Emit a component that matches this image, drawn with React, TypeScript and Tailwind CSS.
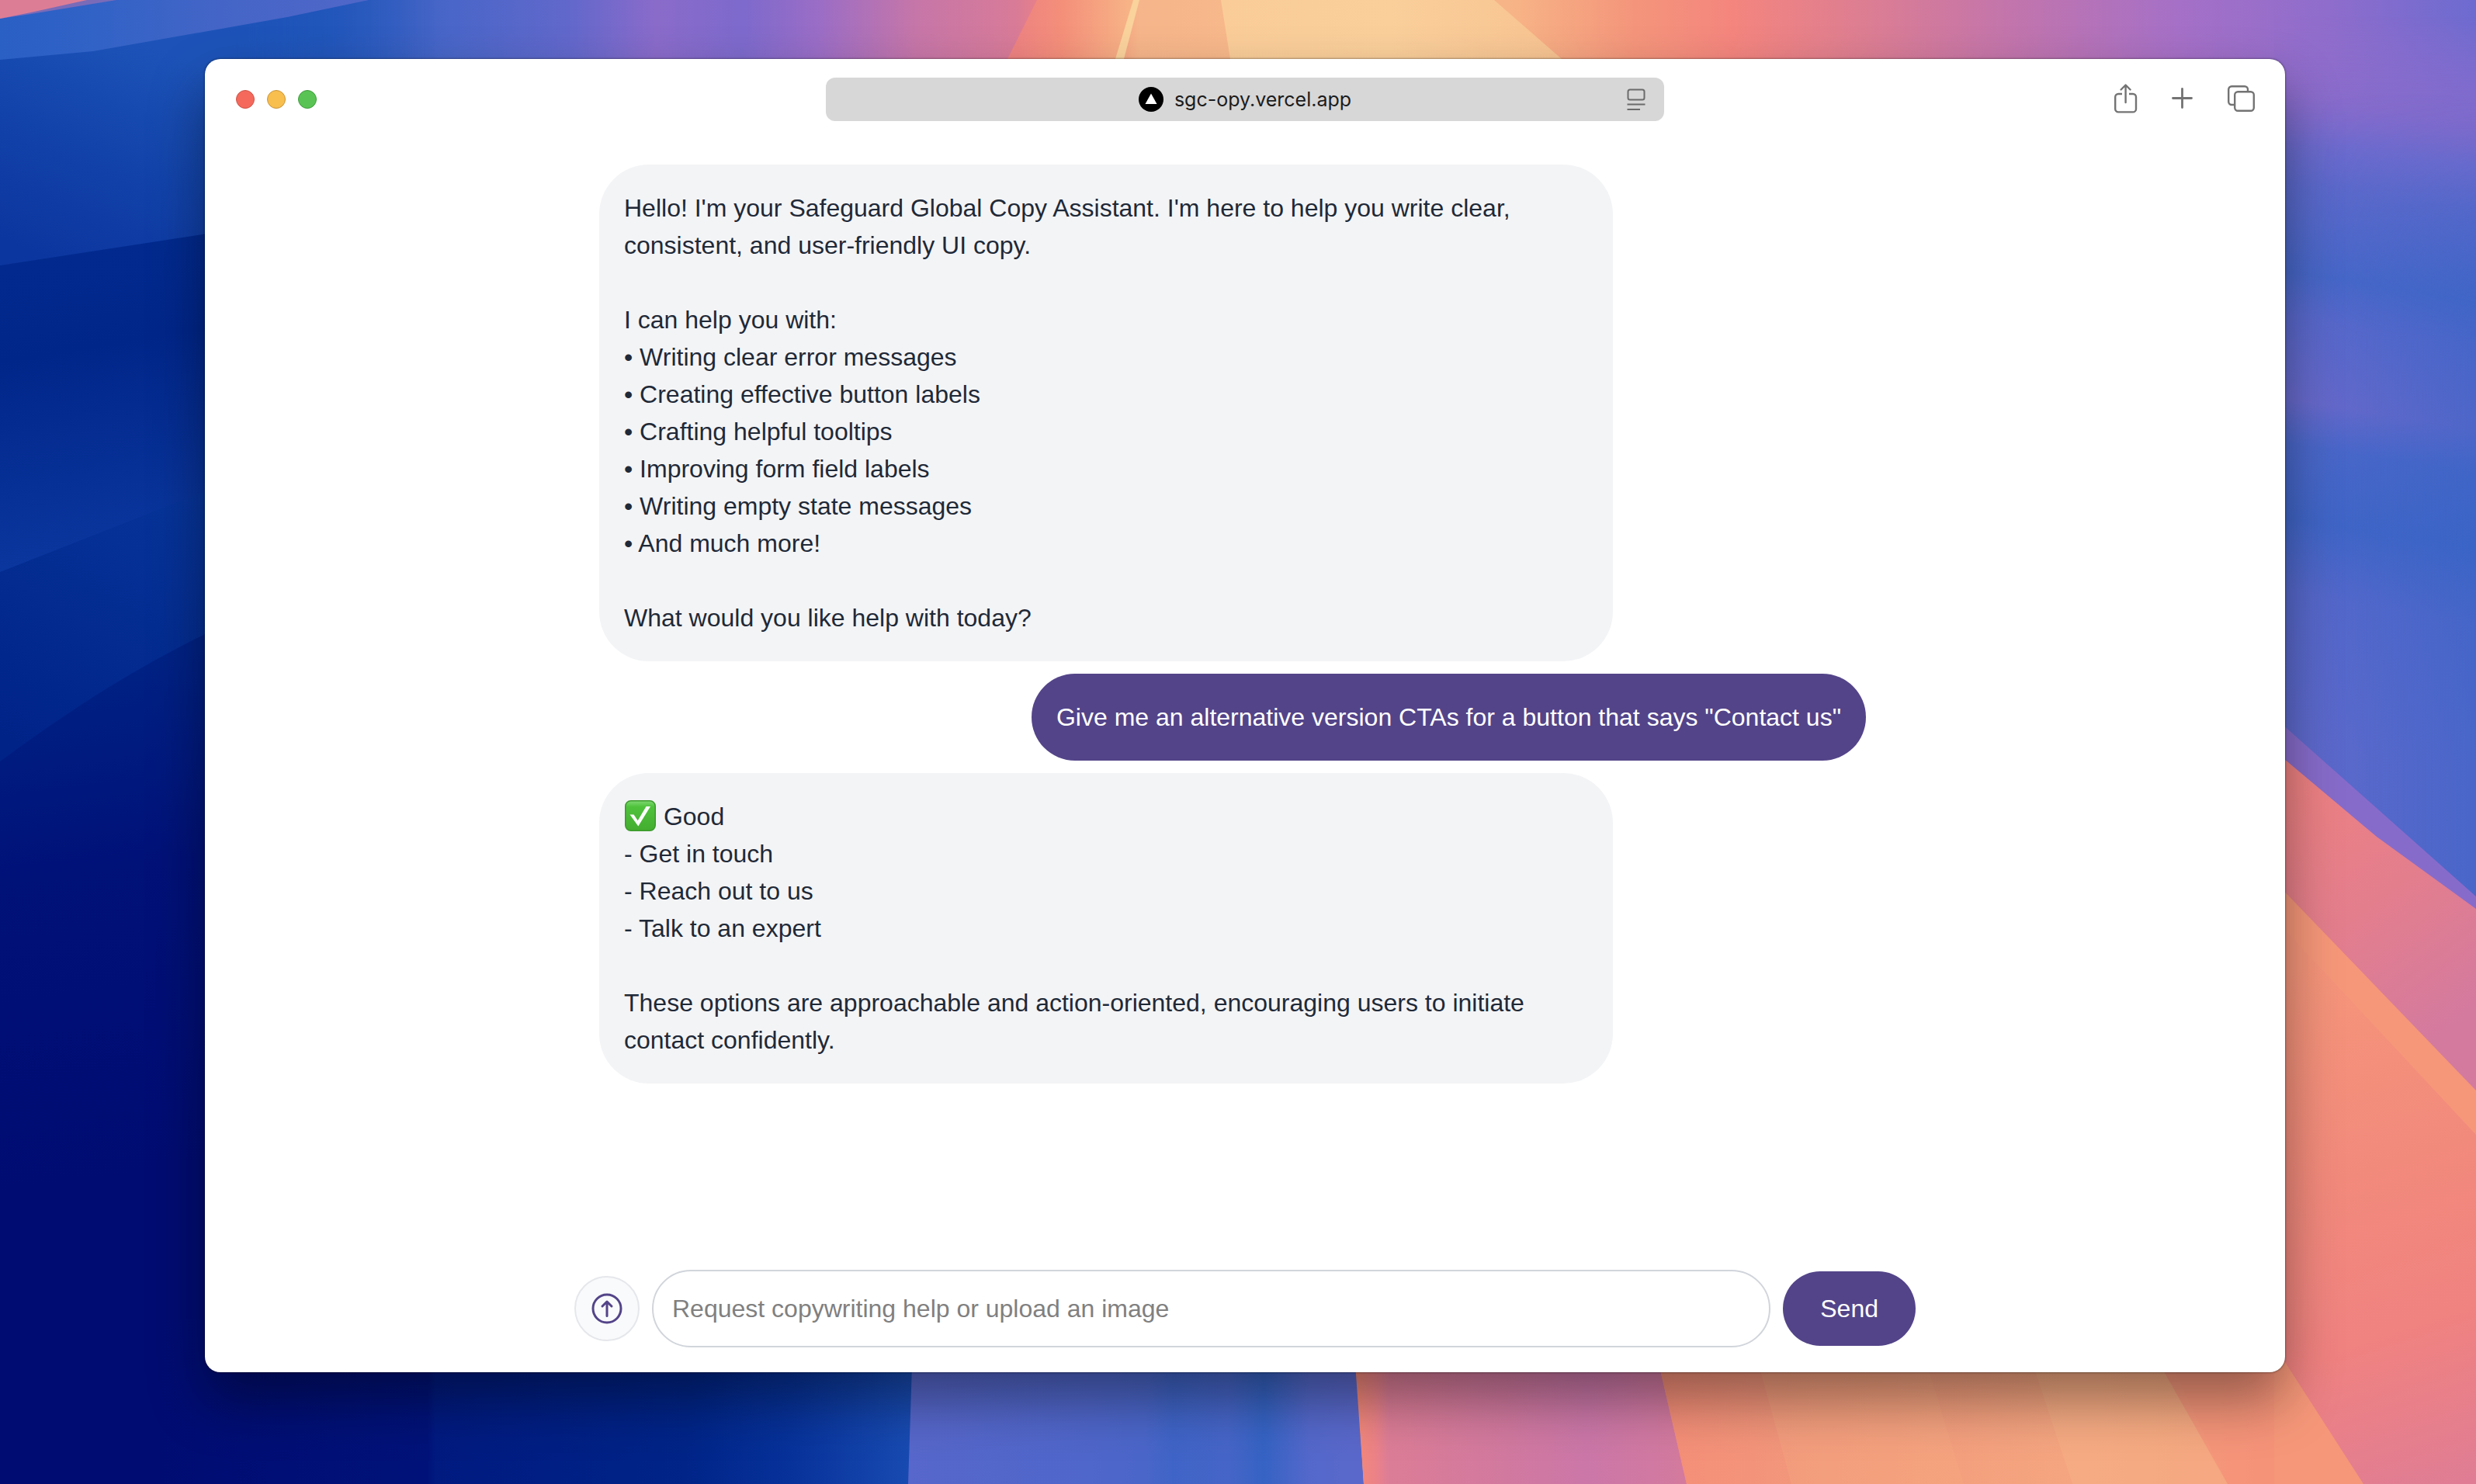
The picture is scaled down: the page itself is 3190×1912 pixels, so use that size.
import React from "react";

const helpTopics = [
  "Writing clear error messages",
  "Creating effective button labels",
  "Crafting helpful tooltips",
  "Improving form field labels",
  "Writing empty state messages",
  "And much more!",
];

const goodOptions = ["Get in touch", "Reach out to us", "Talk to an expert"];

function Wallpaper() {
  return (
    <svg
      className="absolute inset-0 h-full w-full"
      viewBox="0 0 3190 1912"
      preserveAspectRatio="none"
      aria-hidden="true"
    >
      <defs>
        <linearGradient id="sky" gradientUnits="userSpaceOnUse" x1="0" y1="0" x2="3190" y2="0">
          <stop offset="0" stopColor="#1d52b8" />
          <stop offset="0.13" stopColor="#2559bc" />
          <stop offset="0.18" stopColor="#4866c8" />
          <stop offset="0.23" stopColor="#6268cb" />
          <stop offset="0.265" stopColor="#8a6bca" />
          <stop offset="0.3" stopColor="#7d6acc" />
          <stop offset="0.33" stopColor="#9a6dc6" />
          <stop offset="0.37" stopColor="#c676a8" />
          <stop offset="0.41" stopColor="#d87b98" />
          <stop offset="0.425" stopColor="#f08380" />
          <stop offset="0.45" stopColor="#f59f7d" />
          <stop offset="0.46" stopColor="#f6b58a" />
          <stop offset="0.5" stopColor="#f7b88a" />
          <stop offset="0.61" stopColor="#f7b486" />
          <stop offset="0.66" stopColor="#f4957b" />
          <stop offset="0.7" stopColor="#f4857e" />
          <stop offset="0.75" stopColor="#de7e91" />
          <stop offset="0.81" stopColor="#c375ab" />
          <stop offset="0.88" stopColor="#a570c7" />
          <stop offset="0.94" stopColor="#8f6dcc" />
          <stop offset="1" stopColor="#6d6bd0" />
        </linearGradient>
        <linearGradient id="cornerBand" gradientUnits="userSpaceOnUse" x1="0" y1="0" x2="475" y2="0">
          <stop offset="0" stopColor="#2a5fc4" />
          <stop offset="0.25" stopColor="#3162c6" />
          <stop offset="0.6" stopColor="#4465c7" />
          <stop offset="1" stopColor="#5067c8" />
        </linearGradient>
        <linearGradient id="glow" gradientUnits="userSpaceOnUse" x1="1310" y1="0" x2="1455" y2="0">
          <stop offset="0" stopColor="#ee8381" />
          <stop offset="0.4" stopColor="#f48f7a" />
          <stop offset="1" stopColor="#f7b386" />
        </linearGradient>
        <linearGradient id="beam" gradientUnits="userSpaceOnUse" x1="1575" y1="0" x2="2010" y2="0">
          <stop offset="0" stopColor="#facd98" />
          <stop offset="0.5" stopColor="#facf9a" />
          <stop offset="1" stopColor="#f7c391" />
        </linearGradient>
        <linearGradient id="leftTop" gradientUnits="userSpaceOnUse" x1="200" y1="60" x2="80" y2="340">
          <stop offset="0" stopColor="#1d53b8" />
          <stop offset="0.5" stopColor="#1243aa" />
          <stop offset="1" stopColor="#0c369f" />
        </linearGradient>
        <linearGradient id="leftFade" gradientUnits="userSpaceOnUse" x1="300" y1="0" x2="560" y2="0">
          <stop offset="0" stopColor="#fff" />
          <stop offset="1" stopColor="#000" />
        </linearGradient>
        <linearGradient id="leftA" gradientUnits="userSpaceOnUse" x1="60" y1="330" x2="130" y2="740">
          <stop offset="0" stopColor="#022a8e" />
          <stop offset="0.3" stopColor="#01268a" />
          <stop offset="1" stopColor="#0b389f" />
        </linearGradient>
        <linearGradient id="leftB" gradientUnits="userSpaceOnUse" x1="264" y1="640" x2="60" y2="980">
          <stop offset="0" stopColor="#07359a" />
          <stop offset="1" stopColor="#002388" />
        </linearGradient>
        <linearGradient id="leftC" gradientUnits="userSpaceOnUse" x1="160" y1="850" x2="250" y2="1500">
          <stop offset="0" stopColor="#002285" />
          <stop offset="0.4" stopColor="#001178" />
          <stop offset="1" stopColor="#000c72" />
        </linearGradient>
        <linearGradient id="navy" gradientUnits="userSpaceOnUse" x1="200" y1="0" x2="1175" y2="0">
          <stop offset="0" stopColor="#000c72" />
          <stop offset="0.36" stopColor="#001279" />
          <stop offset="0.37" stopColor="#001a80" />
          <stop offset="0.7" stopColor="#002488" />
          <stop offset="0.84" stopColor="#07329a" />
          <stop offset="1" stopColor="#184bb2" />
        </linearGradient>
        <linearGradient id="indigo" gradientUnits="userSpaceOnUse" x1="1172" y1="0" x2="1757" y2="0">
          <stop offset="0" stopColor="#5767cb" />
          <stop offset="0.4" stopColor="#4f66ca" />
          <stop offset="0.52" stopColor="#4a66c9" />
          <stop offset="0.58" stopColor="#3f64c7" />
          <stop offset="0.7" stopColor="#4665c8" />
          <stop offset="0.78" stopColor="#3563c4" />
          <stop offset="0.88" stopColor="#5468cb" />
          <stop offset="1" stopColor="#5b68cb" />
        </linearGradient>
        <linearGradient id="pink" gradientUnits="userSpaceOnUse" x1="1747" y1="0" x2="2172" y2="0">
          <stop offset="0" stopColor="#f48978" />
          <stop offset="0.06" stopColor="#ec8287" />
          <stop offset="0.1" stopColor="#dc7d97" />
          <stop offset="0.45" stopColor="#d2799f" />
          <stop offset="0.7" stopColor="#cb77a8" />
          <stop offset="1" stopColor="#d47a9e" />
        </linearGradient>
        <linearGradient id="orange" gradientUnits="userSpaceOnUse" x1="2140" y1="0" x2="3040" y2="0">
          <stop offset="0" stopColor="#f58e78" />
          <stop offset="0.2" stopColor="#f2977b" />
          <stop offset="0.6" stopColor="#f5a680" />
          <stop offset="0.8" stopColor="#f4a07d" />
          <stop offset="1" stopColor="#f68f78" />
        </linearGradient>
        <linearGradient id="rightSky" gradientUnits="userSpaceOnUse" x1="2990" y1="0" x2="2840" y2="940">
          <stop offset="0" stopColor="#9a6ecb" />
          <stop offset="0.13" stopColor="#866bcb" />
          <stop offset="0.19" stopColor="#6f6bce" />
          <stop offset="0.25" stopColor="#5c69cb" />
          <stop offset="0.37" stopColor="#4767c8" />
          <stop offset="0.43" stopColor="#5968cb" />
          <stop offset="0.54" stopColor="#6769cb" />
          <stop offset="0.6" stopColor="#4a67c9" />
          <stop offset="0.7" stopColor="#4065c7" />
          <stop offset="0.8" stopColor="#5668cb" />
          <stop offset="1" stopColor="#5e69cc" />
        </linearGradient>
        <linearGradient id="rightFade" gradientUnits="userSpaceOnUse" x1="0" y1="20" x2="0" y2="190">
          <stop offset="0" stopColor="#000" />
          <stop offset="1" stopColor="#fff" />
        </linearGradient>
        <mask id="rightMask">
          <rect width="3190" height="1912" fill="url(#rightFade)" />
        </mask>
        <linearGradient id="blueFade" gradientUnits="userSpaceOnUse" x1="0" y1="120" x2="0" y2="440">
          <stop offset="0" stopColor="#000" />
          <stop offset="1" stopColor="#fff" />
        </linearGradient>
        <mask id="blueMask">
          <rect width="3190" height="1912" fill="url(#blueFade)" />
        </mask>
        <linearGradient id="rightSkyBlue" gradientUnits="userSpaceOnUse" x1="2980" y1="0" x2="3190" y2="0">
          <stop offset="0" stopColor="#3564c6" stopOpacity="0" />
          <stop offset="1" stopColor="#3564c6" stopOpacity="0.5" />
        </linearGradient>
        <linearGradient id="coral" gradientUnits="userSpaceOnUse" x1="2960" y1="1000" x2="3190" y2="1300">
          <stop offset="0" stopColor="#ee8182" />
          <stop offset="0.5" stopColor="#e37e8d" />
          <stop offset="1" stopColor="#d47a9f" />
        </linearGradient>
        <linearGradient id="peach" gradientUnits="userSpaceOnUse" x1="2944" y1="1250" x2="3160" y2="1912">
          <stop offset="0" stopColor="#f5957a" />
          <stop offset="0.4" stopColor="#f28a7c" />
          <stop offset="0.7" stopColor="#f08280" />
          <stop offset="1" stopColor="#e07d94" />
        </linearGradient>
        <mask id="leftMask">
          <rect width="3190" height="1912" fill="url(#leftFade)" />
        </mask>
      </defs>

      <rect width="3190" height="1912" fill="url(#sky)" />
      <rect width="600" height="400" fill="url(#leftTop)" mask="url(#leftMask)" />
      <path d="M0 0H475L370 22 120 66 0 77Z" fill="url(#cornerBand)" />
      <path d="M0 0H150L40 18 0 24Z" fill="#7a6bb8" />
      <path d="M0 0H112L40 16 0 24Z" fill="#dd7d95" />
      <path d="M1336 0H1460L1440 76H1298Z" fill="url(#glow)" />
      <path d="M1460 0H1468L1448 76H1437Z" fill="#fad29c" />
      <path d="M1573 0H1925L2012 76H1585Z" fill="url(#beam)" />

      <path d="M0 342L300 296V640L0 740Z" fill="url(#leftA)" />
      <path d="M0 737L300 619V830L0 984Z" fill="url(#leftB)" />
      <path d="M0 981C90 915 180 855 300 800V1912H0Z" fill="url(#leftC)" />

      <rect x="200" y="1700" width="980" height="212" fill="url(#navy)" />
      <path d="M1177 1700H1744L1757 1912H1170Z" fill="url(#indigo)" />
      <path d="M1742 1700H2124L2173 1912H1757Z" fill="url(#pink)" />
      <path d="M2124 1700H2944L3060 1912H2173Z" fill="url(#orange)" />
      <path d="M2250 1700H2465L2530 1912H2308Z" fill="#f6a882" opacity="0.35" />
      <path d="M2600 1700H2770L2870 1912H2670Z" fill="#f7b488" opacity="0.4" />
      <path d="M2750 1700H2944L3060 1912H2870Z" fill="#f59077" opacity="0.7" />

      <path d="M2930 0L3190 0V1200H2930Z" fill="url(#rightSky)" mask="url(#rightMask)" />
      <path d="M2930 100H3190V1160L2930 930Z" fill="url(#rightSkyBlue)" mask="url(#blueMask)" />
      <path d="M2930 924L3190 1155V1200H2930Z" fill="#876bca" />
      <path d="M2930 967L3062 1078 3190 1171V1460H2930Z" fill="url(#coral)" />
      <path d="M2930 1135L3190 1405V1912H2930Z" fill="#f69779" />
      <path d="M2930 1183L3190 1462V1912H3045L2944 1755H2930Z" fill="url(#peach)" />
    </svg>
  );
}

function CheckMark() {
  return (
    <svg
      className="mr-px inline-block h-10 w-[41px] align-[-8px]"
      viewBox="0 0 41 40"
      role="img"
      aria-label="Check mark"
    >
      <defs>
        <linearGradient id="tick" x1="0" y1="0" x2="0" y2="1">
          <stop offset="0" stopColor="#7fd873" />
          <stop offset="0.2" stopColor="#4fc23c" />
          <stop offset="1" stopColor="#43ad2f" />
        </linearGradient>
      </defs>
      <rect x="1.75" y="0.75" width="38.5" height="38.5" rx="7" fill="url(#tick)" stroke="#3c9a2c" strokeWidth="1.5" />
      <path d="M7.5 18.5L12.5 18.5 17.7 26.2 28.5 8H34L18.3 33.5Z" fill="#fff" />
    </svg>
  );
}

function ShareIcon() {
  return (
    <svg className="size-9" viewBox="0 0 36 36" fill="none" stroke="#737373" strokeWidth="2.4" strokeLinecap="round" strokeLinejoin="round" overflow="visible">
      <path strokeLinecap="butt" d="M12 11H7.2a4 4 0 0 0-4 4V30.400a4 4 0 0 0 4 4H26a4 4 0 0 0 4-4V15a4 4 0 0 0-4-4H21" />
      <path d="M16.600 22V0M10.600 5.500L16.600-0.500 22.600 5.500" />
    </svg>
  );
}

function PlusIcon() {
  return (
    <svg className="size-9" viewBox="0 0 36 36" fill="none" stroke="#737373" strokeWidth="2.8" strokeLinecap="round">
      <path d="M3.500 16.500H27.500M15.500 4.500V28.500" />
    </svg>
  );
}

function TabsIcon() {
  return (
    <svg className="size-9" viewBox="0 0 36 36" fill="none" stroke="#737373" strokeWidth="2.4">
      <rect x="9.200" y="8.200" width="24.600" height="24.600" rx="4" />
      <path d="M9 25H5.200a4 4 0 0 1-4-4V5.200a4 4 0 0 1 4-4H22a4 4 0 0 1 4 4V8" />
    </svg>
  );
}

function ReaderIcon() {
  return (
    <svg className="h-7 w-6" viewBox="0 0 24 28" fill="none" stroke="#6b6b6b" strokeWidth="2">
      <rect x="1.500" y="1.500" width="21" height="13" rx="2.500" />
      <path d="M0.500 20.500H23.500M0.500 27H17" />
    </svg>
  );
}

function TitleBar() {
  return (
    <header className="grid grid-cols-[1fr_minmax(0,1080px)_1fr] items-center py-6 pr-[38px] pl-[38px]">
      <div className="flex gap-4 pl-0.5">
        <button aria-label="Close window" className="size-6 rounded-full border border-[#cf5347] bg-[#f4695c]" />
        <button aria-label="Minimize window" className="size-6 rounded-full border border-[#c9963a] bg-[#f8be4e]" />
        <button aria-label="Zoom window" className="size-6 rounded-full border border-[#3f9b3d] bg-[#59c454]" />
      </div>
      <div className="relative flex h-14 items-center justify-center gap-[14px] rounded-xl bg-[#d7d7d7]">
        <svg className="size-8 shrink-0" viewBox="0 0 32 32" aria-hidden="true">
          <circle cx="16" cy="16" r="16" fill="#000" />
          <path d="M16 8.500L23.500 22H8.500Z" fill="#fff" />
        </svg>
        <input
          aria-label="Address"
          defaultValue="sgc-opy.vercel.app"
          className="field-sizing-content font-['Inter',sans-serif] text-[25px] leading-8 text-[#1c1c1c] outline-none"
        />
        <button aria-label="Show reader" className="absolute right-6">
          <ReaderIcon />
        </button>
      </div>
      <div className="flex items-center justify-end gap-[38px]">
        <button aria-label="Share"><ShareIcon /></button>
        <button aria-label="New tab"><PlusIcon /></button>
        <button aria-label="Show tabs"><TabsIcon /></button>
      </div>
    </header>
  );
}

function AssistantMessage({ children }: { children: React.ReactNode }) {
  return (
    <article className="w-4/5 space-y-12 self-start rounded-[64px] bg-[#f3f4f6] p-8 text-[#1f2937]">
      {children}
    </article>
  );
}

export default function App() {
  return (
    <div className="relative flex min-h-screen flex-col pt-[76px] pr-[246px] pb-[144px] pl-[264px] font-['Liberation_Sans',Arial,sans-serif] text-[32px] leading-[48px]">
      <Wallpaper />
      <div className="relative flex grow flex-col rounded-[20px] bg-white shadow-[0_0_3px_rgba(0,0,0,0.6),0_36px_70px_rgba(0,0,0,0.4)]">
        <TitleBar />
        <main className="mx-auto flex w-full max-w-[1792px] grow flex-col px-8">
          <section aria-label="Conversation" className="flex grow flex-col gap-4 py-8 pr-16 pl-8">
            <AssistantMessage>
              <p>
                Hello! I'm your Safeguard Global Copy Assistant. I'm here to help you write clear,
                consistent, and user-friendly UI copy.
              </p>
              <div>
                <p>I can help you with:</p>
                <ul>
                  {helpTopics.map((topic) => (
                    <li key={topic}>• {topic}</li>
                  ))}
                </ul>
              </div>
              <p>What would you like help with today?</p>
            </AssistantMessage>
            <article className="max-w-4/5 self-end rounded-[64px] bg-[#534489] p-8 text-white">
              Give me an alternative version CTAs for a button that says "Contact us"
            </article>
            <AssistantMessage>
              <div>
                <p>
                  <CheckMark /> Good
                </p>
                <ul>
                  {goodOptions.map((option) => (
                    <li key={option}>- {option}</li>
                  ))}
                </ul>
              </div>
              <p>
                These options are approachable and action-oriented, encouraging users to initiate
                contact confidently.
              </p>
            </AssistantMessage>
          </section>
          <form className="flex items-center gap-4 pb-8" onSubmit={(e) => e.preventDefault()}>
            <button
              type="button"
              aria-label="Upload an image"
              className="flex size-[84px] shrink-0 items-center justify-center rounded-full border-2 border-[#e5e7eb] bg-[#f9fafb]"
            >
              <svg className="size-10" viewBox="0 0 40 40" fill="none" stroke="#534489" strokeWidth="3" strokeLinecap="round" strokeLinejoin="round">
                <circle cx="20" cy="20" r="18" />
                <path d="M20 29.500V11.500M14 17L20 11 26 17" />
              </svg>
            </button>
            <input
              type="text"
              aria-label="Message"
              placeholder="Request copywriting help or upload an image"
              className="h-[100px] min-w-0 grow rounded-full border-2 border-[#d1d5db] px-6 outline-none placeholder:text-[#808080]"
            />
            <button type="submit" className="rounded-full bg-[#534489] px-12 py-6 text-white">
              Send
            </button>
          </form>
        </main>
      </div>
    </div>
  );
}
